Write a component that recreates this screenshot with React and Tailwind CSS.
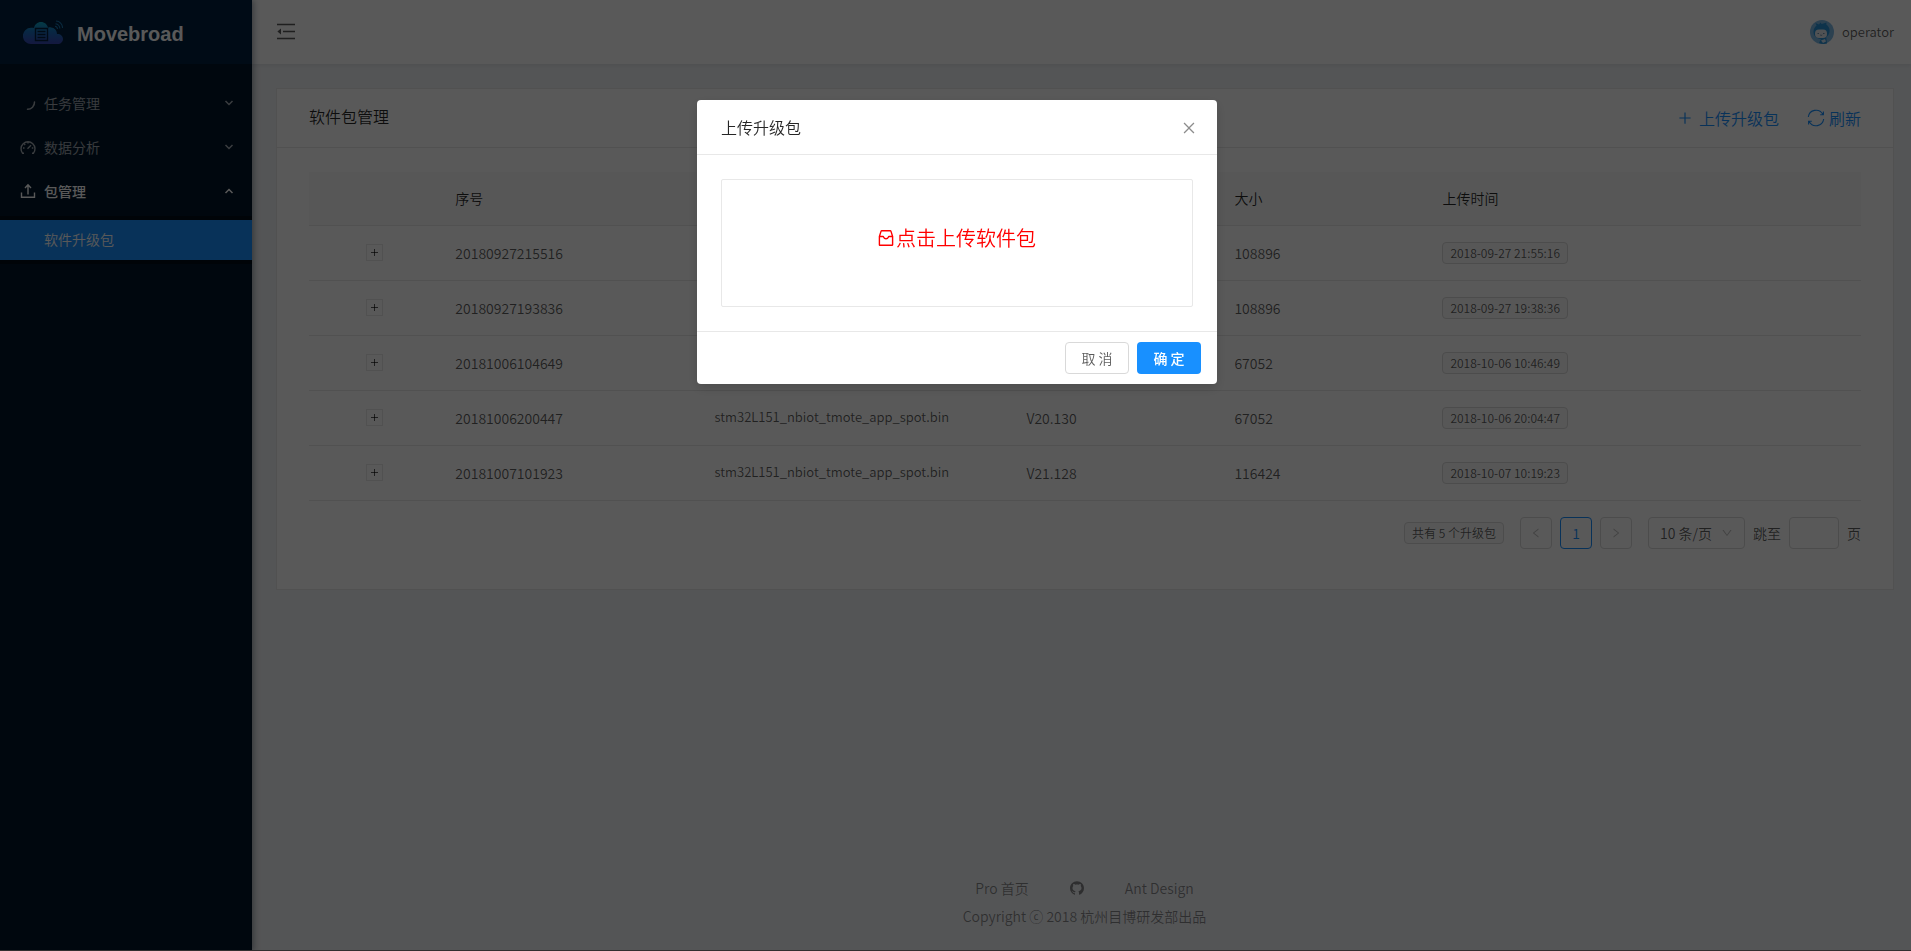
import React from "react";
import {
  AiOutlineDown,
  AiOutlineLeft,
  AiOutlineRight,
  AiOutlinePlus,
  AiOutlineGithub,
  AiOutlineClose,
} from "react-icons/ai";

const rows = [
  ["20180927215516", "stm32L151_nbiot_tmote_app_spot.bin", "V20.127", "108896", "2018-09-27 21:55:16"],
  ["20180927193836", "stm32L151_nbiot_tmote_app_spot.bin", "V20.127", "108896", "2018-09-27 19:38:36"],
  ["20181006104649", "stm32L151_nbiot_tmote_app_spot.bin", "V20.129", "67052", "2018-10-06 10:46:49"],
  ["20181006200447", "stm32L151_nbiot_tmote_app_spot.bin", "V20.130", "67052", "2018-10-06 20:04:47"],
  ["20181007101923", "stm32L151_nbiot_tmote_app_spot.bin", "V21.128", "116424", "2018-10-07 10:19:23"],
];

function Logo() {
  return (
    <svg className="h-6 w-10" viewBox="0 0 40 24" fill="none" aria-hidden="true">
      <defs>
        <linearGradient id="cloud" x1="0" y1="0" x2="0" y2="1">
          <stop offset="0" stopColor="#0fa8c8" />
          <stop offset="0.45" stopColor="#1a6fc0" />
          <stop offset="1" stopColor="#3a46b4" />
        </linearGradient>
      </defs>
      <path
        fill="url(#cloud)"
        d="M8 24a8 8 0 0 1 0-16.200c1-.2 2-.1 3 .2C11.600 4.500 14.500 2 18 2s6.300 2.300 7 5.800c1-.4 2-.5 3-.4 3.500.2 6 3 6 6.600 3.400-.2 6 1.900 6 5 0 2.900-2.300 5-5.200 5z"
      />
      <path stroke="#05203f" strokeWidth="1.400" d="M12.500 8.500h12v12h-12zM14.500 11.500h8M14.500 14.500h8M14.500 17.500h8" />
      <path stroke="#1a76b0" strokeWidth="1.100" d="M33 1q6 .6 6.600 7M32.500 3.700q4 .6 4.400 4.800M32 6.300q2.400.3 2.500 2.700" />
    </svg>
  );
}

function Avatar() {
  return (
    <svg className="size-6" viewBox="0 0 24 24" aria-hidden="true">
      <circle cx="12" cy="12" r="12" fill="#7fb9e6" />
      <path fill="#2a93d8" d="M5.500 3 9 4.400 10.500 2.600l1.200 1.500L16.500 2.500 16.300 4.500c2.200 1.400 3.400 3.800 3.300 6.500-.1 2.600-1.400 4.800-3.400 6L17 23.500q-4 1-8-.5l2-4C6 18.500 3.400 15.500 3.500 11.500c.1-2.300 1.200-4.500 3-6z" />
      <rect x="5" y="9.500" width="12" height="8.500" rx="4" fill="#e6ebf0" />
      <path stroke="#6b8fae" strokeWidth="1" fill="none" d="M7.500 13.500H9M13 13.500h1.500M10.200 15q1 .7 2 0" />
      <path fill="#cfe2f2" d="M11 20.500 15 19l1 2.500-3 1.500z" />
    </svg>
  );
}

function FoldIcon() {
  return (
    <svg className="h-5 w-[18px]" viewBox="0 0 18 20" aria-hidden="true">
      <path stroke="currentColor" strokeWidth="1.500" d="M0 2.500h18M6 9.500h12M0 16.500h18" />
      <path fill="currentColor" d="M4 6.500v6L.4 9.500z" />
    </svg>
  );
}

function InboxIcon() {
  return (
    <svg className="size-4" viewBox="0 0 16 16" fill="none" stroke="currentColor" strokeWidth="1.400" strokeLinejoin="round" aria-hidden="true">
      <path d="M3.800.8h8.400q.6 0 .8.600L14.600 6.500v8.200q0 .6-.6.6H2q-.6 0-.6-.6V6.500L3 1.400q.2-.6.8-.6zM1.400 6.500h3.600c.4 0 .5.3.7.8.3.8 1.100 1.400 2.300 1.400s2-.6 2.300-1.400c.2-.5.3-.8.700-.8h3.600" />
    </svg>
  );
}

function SyncIcon() {
  return (
    <svg className="size-[18px]" viewBox="0 0 18 18" fill="none" stroke="currentColor" strokeWidth="1.100" aria-hidden="true">
      <path d="M1.300 8A7.800 7.800 0 0 1 15.800 5.200M16.700 10A7.800 7.800 0 0 1 2.200 12.800M16.400 2.500v3.200h-3.200M1.600 15.500v-3.200h3.200" />
    </svg>
  );
}

function LoadingArc() {
  return (
    <svg className="size-4" viewBox="0 0 16 16" fill="none" aria-hidden="true">
      <path stroke="currentColor" strokeWidth="1.500" strokeLinecap="round" d="M14.500 7a7 7 0 0 1-7 7.300" />
    </svg>
  );
}

function GaugeIcon() {
  return (
    <svg className="size-4" viewBox="0 0 16 16" fill="none" stroke="currentColor" strokeWidth="1.400" aria-hidden="true">
      <path d="M4 14.200H2.600a7 7 0 1 1 10.800 0H12M7.500 9.800 11 6.300M3 9h1.500M11.800 9h1.500M8 3v1.500M4.300 5l.9.900" />
    </svg>
  );
}

function UploadIcon() {
  return (
    <svg className="size-4" viewBox="0 0 16 16" fill="none" stroke="currentColor" strokeWidth="1.400" aria-hidden="true">
      <path d="M1.500 9.500v4.800h13V9.500M8 11.500V2.500M5 5l3-3.200L11 5" />
    </svg>
  );
}

function Chevron({ up }) {
  return (
    <svg className="ml-auto h-2 w-2.5" viewBox="0 0 10 8" fill="none" aria-hidden="true">
      <path stroke="currentColor" strokeWidth="1.500" d={up ? "M1.500 6 5 2.500 8.500 6" : "M1.500 2 5 5.500 8.500 2"} />
    </svg>
  );
}

function MenuItem({ icon, label, open }) {
  return (
    <li>
      <button
        type="button"
        aria-expanded={!!open}
        className={
          "my-1 flex h-10 w-full items-center gap-2 pr-[18px] pb-0.5 pl-5 text-sm " +
          (open ? "text-white" : "text-white/65")
        }
      >
        {icon}
        <span className={open ? "font-medium" : ""}>{label}</span>
        <Chevron up={open} />
      </button>
    </li>
  );
}

function Tag({ children }) {
  return (
    <span className="inline-block h-[22px] rounded border border-[#d9d9d9] bg-[#fafafa] px-[7px] text-xs leading-5 whitespace-nowrap">
      {children}
    </span>
  );
}

function Sidebar() {
  return (
    <aside className="z-10 flex w-[252px] shrink-0 flex-col bg-[#001529] shadow-[2px_0_6px_rgba(0,21,41,0.35)]">
      <div className="flex h-16 items-center gap-3.5 bg-[#002140] pl-[23px]">
        <Logo />
        <h1 className="pt-1 font-['Liberation_Sans',sans-serif] text-xl font-bold text-white">Movebroad</h1>
      </div>
      <nav className="py-4">
        <ul>
          <MenuItem icon={<LoadingArc />} label="任务管理" />
          <MenuItem icon={<GaugeIcon />} label="数据分析" />
          <MenuItem icon={<UploadIcon />} label="包管理" open />
        </ul>
        <ul className="bg-[#000c17] py-1">
          <li>
            <a href="#packages" className="flex h-10 items-center bg-[#1890ff] pb-0.5 pl-11 text-sm text-white">
              软件升级包
            </a>
          </li>
        </ul>
      </nav>
    </aside>
  );
}

function Pagination() {
  const box = "flex size-8 items-center justify-center rounded border ";
  return (
    <div className="mt-4 flex items-center justify-end gap-2 text-sm">
      <div className="mr-2 flex">
        <Tag>共有 5 个升级包</Tag>
      </div>
      <button type="button" aria-label="上一页" className={box + "border-[#d9d9d9] text-black/25"}>
        <AiOutlineLeft className="size-3" />
      </button>
      <button type="button" className={box + "border-[#1890ff] text-[#1890ff]"}>1</button>
      <button type="button" aria-label="下一页" className={box + "border-[#d9d9d9] text-black/25"}>
        <AiOutlineRight className="size-3" />
      </button>
      <div className="relative ml-2">
        <select aria-label="每页条数" className="h-8 w-[97px] appearance-none rounded border border-[#d9d9d9] bg-white pl-[11px]">
          <option>10 条/页</option>
        </select>
        <AiOutlineDown className="pointer-events-none absolute top-2.5 right-3 size-3 text-black/25" />
      </div>
      <label htmlFor="jump">跳至</label>
      <input id="jump" type="text" className="h-8 w-[50px] rounded border border-[#d9d9d9] px-2" />
      <span>页</span>
    </div>
  );
}

function PackageCard() {
  return (
    <section className="border border-[#e8e8e8] bg-white">
      <header className="flex h-[59px] items-center justify-between border-b border-[#e8e8e8] px-8">
        <h2 className="pb-1 text-base text-black/85">软件包管理</h2>
        <div className="flex gap-7 text-base text-[#1890ff]">
          <button type="button" className="flex items-center gap-1.5">
            <AiOutlinePlus className="size-4" />
            上传升级包
          </button>
          <button type="button" className="flex items-center gap-1">
            <SyncIcon />
            刷新
          </button>
        </div>
      </header>
      <div className="px-8 pt-6 pb-10">
        <table className="w-full table-fixed text-left text-sm">
          <colgroup>
            <col className="w-[8.4%]" />
            <col className="w-[16.7%]" />
            <col className="w-[20.1%]" />
            <col className="w-[13.4%]" />
            <col className="w-[13.4%]" />
            <col className="w-[28%]" />
          </colgroup>
          <thead>
            <tr className="h-[53px] border-b border-[#e8e8e8] bg-[#fafafa] text-black/85">
              <th className="px-4 font-[350]"></th>
              <th className="px-4 font-[350]">序号</th>
              <th className="px-4 font-[350]">文件名</th>
              <th className="px-4 font-[350]">版本</th>
              <th className="px-4 font-[350]">大小</th>
              <th className="px-4 font-[350]">上传时间</th>
            </tr>
          </thead>
          <tbody>
            {rows.map(([id, file, version, size, time]) => (
              <tr key={id} className="h-[55px] border-b border-[#e8e8e8]">
                <td>
                  <button
                    type="button"
                    aria-label="展开"
                    className="mx-auto flex size-[17px] items-center justify-center border border-[#e8e8e8] bg-white"
                  >
                    <svg className="size-[7px]" viewBox="0 0 7 7" aria-hidden="true">
                      <path stroke="currentColor" d="M0 3.500h7M3.500 0v7" />
                    </svg>
                  </button>
                </td>
                <td className="px-4">{id}</td>
                <td className="px-4 text-[13px]">{file}</td>
                <td className="px-4">{version}</td>
                <td className="px-4">{size}</td>
                <td className="px-4"><Tag>{time}</Tag></td>
              </tr>
            ))}
          </tbody>
        </table>
        <Pagination />
      </div>
    </section>
  );
}

function UploadDialog() {
  return (
    <div className="fixed inset-0 z-20 bg-black/65 pt-[100px] pl-[3px]">
      <div
        role="dialog"
        aria-modal="true"
        aria-labelledby="dialog-title"
        className="mx-auto w-[520px] rounded bg-white shadow-[0_4px_12px_rgba(0,0,0,0.15)]"
      >
        <header className="flex h-[55px] items-center justify-between border-b border-[#e8e8e8] pr-5 pl-6">
          <h2 id="dialog-title" className="text-base text-black/85">上传升级包</h2>
          <button type="button" aria-label="关闭" className="pt-0.5 text-black/45">
            <AiOutlineClose className="size-4" />
          </button>
        </header>
        <div className="p-6">
          <div className="flex h-32 items-start justify-center rounded-xs border border-[#e8e8e8] pt-11">
            <button type="button" className="flex items-center gap-0.5 text-xl text-[#ff0000]">
              <InboxIcon />
              点击上传软件包
            </button>
          </div>
        </div>
        <footer className="flex justify-end gap-2 border-t border-[#e8e8e8] px-4 py-2.5 text-sm">
          <button type="button" className="h-8 w-16 rounded border border-[#d9d9d9] bg-white">取 消</button>
          <button type="button" className="h-8 w-16 rounded bg-[#1890ff] font-medium text-white">确 定</button>
        </footer>
      </div>
    </div>
  );
}

export default function App() {
  return (
    <div className="flex min-h-screen bg-[#f0f2f5] font-['Noto_Sans_CJK_SC',sans-serif] text-sm font-[350] text-black/65">
      <Sidebar />
      <div className="flex min-w-0 grow flex-col">
        <header className="flex h-16 items-center justify-between bg-white pr-[17px] pl-[25px] shadow-[0_1px_4px_rgba(0,21,41,0.08)]">
          <button type="button" aria-label="收起菜单">
            <FoldIcon />
          </button>
          <a href="#account" className="flex items-center gap-2 text-[13px]">
            <Avatar />
            operator
          </a>
        </header>
        <main className="pt-6 pr-[17px] pl-6">
          <PackageCard />
        </main>
        <footer className="mt-auto pb-[25px] pl-1.5 text-center text-black/45">
          <div className="mb-2 flex items-center justify-center gap-10">
            <a href="#home">Pro 首页</a>
            <a href="#github" aria-label="GitHub"><AiOutlineGithub className="size-4" /></a>
            <a href="#design">Ant Design</a>
          </div>
          <p>Copyright ⓒ 2018 杭州目博研发部出品</p>
        </footer>
      </div>
      <UploadDialog />
      <div className="fixed inset-x-0 bottom-0 z-30 h-px bg-[#332f30]" />
    </div>
  );
}
